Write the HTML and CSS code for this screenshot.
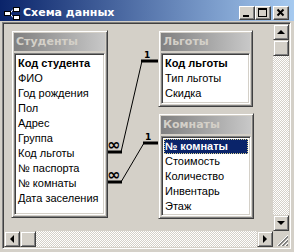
FILE: index.html
```html
<!DOCTYPE html>
<html>
<head>
<meta charset="utf-8">
<link rel="stylesheet" href="styles.css">
</head>
<body>
<div class="win">
  <div class="titlebar">
    <svg class="appicon" width="16" height="14" viewBox="0 0 16 14">
      <path d="M6 7.5 L9 3.5 M6 7.5 L9 11.5" stroke="#fff" stroke-width="1" fill="none"/>
      <rect x="0.5" y="5.5" width="6" height="4" fill="#fff" stroke="#000"/>
      <rect x="9.5" y="1.5" width="6" height="4" fill="#fff" stroke="#000"/>
      <rect x="9.5" y="9.5" width="6" height="4" fill="#fff" stroke="#000"/>
    </svg>
    <span class="title">Схема данных</span>
    <div class="tbtns">
      <span class="tbtn"><svg width="14" height="12" viewBox="0 0 14 12"><rect x="3" y="8" width="6" height="2" fill="#000"/></svg></span>
      <span class="tbtn"><svg width="14" height="12" viewBox="0 0 14 12"><rect x="2.5" y="1.5" width="8" height="8" fill="none" stroke="#000"/><rect x="2" y="1" width="9" height="2" fill="#000"/></svg></span>
      <span class="tbtn close"><svg width="14" height="12" viewBox="0 0 14 12"><path d="M3.5 2.5 L9.5 8.5 M9.5 2.5 L3.5 8.5" stroke="#000" stroke-width="2" fill="none"/></svg></span>
    </div>
  </div>
  <div class="frame">
    <div class="client">
      <div class="canvas">
        <svg class="links" width="269" height="207" viewBox="0 0 269 207">
          <g fill="none" stroke="#000">
            <path d="M117 128 L138 37" stroke-width="1"/>
            <path d="M117 158 L140 119" stroke-width="1"/>
            <path d="M103 128 H118 M137 37 H154 M103 158 H118 M139 119 H154" stroke-width="3"/>
          </g>
          <g class="marks">
            <text x="140" y="34" class="one">1</text>
            <text x="141" y="116" class="one">1</text>
            <text x="103" y="126" class="inf">∞</text>
            <text x="103" y="156" class="inf">∞</text>
          </g>
        </svg>
        <div class="tbl t-stud">
          <div class="thead">Студенты</div>
          <div class="tlist">
            <div class="row key">Код студента</div>
            <div class="row">ФИО</div>
            <div class="row">Год рождения</div>
            <div class="row">Пол</div>
            <div class="row">Адрес</div>
            <div class="row">Группа</div>
            <div class="row">Код льготы</div>
            <div class="row">№ паспорта</div>
            <div class="row">№ комнаты</div>
            <div class="row">Дата заселения</div>
          </div>
        </div>
        <div class="tbl t-lgot">
          <div class="thead">Льготы</div>
          <div class="tlist">
            <div class="row key">Код льготы</div>
            <div class="row">Тип льготы</div>
            <div class="row">Скидка</div>
          </div>
        </div>
        <div class="tbl t-room">
          <div class="thead">Комнаты</div>
          <div class="tlist">
            <div class="row key sel">№ комнаты</div>
            <div class="row">Стоимость</div>
            <div class="row">Количество</div>
            <div class="row">Инвентарь</div>
            <div class="row">Этаж</div>
          </div>
        </div>
      </div>
      <div class="vscroll">
        <div class="sbtn"><span class="arr up"></span></div>
        <div class="sbtn thumb"></div>
        <div class="track"></div>
        <div class="sbtn"><span class="arr down"></span></div>
      </div>
      <div class="hscroll">
        <div class="sbtn"><span class="arr left"></span></div>
        <div class="sbtn thumb"></div>
        <div class="track"></div>
        <div class="sbtn"><span class="arr right"></span></div>
      </div>
      <div class="grip">
        <svg width="16" height="16" viewBox="0 0 16 16">
          <path d="M15 4 L4 15 M15 8 L8 15 M15 12 L12 15" stroke="#fff" stroke-width="1"/>
          <path d="M15 5 L5 15 M15 6 L6 15 M15 9 L9 15 M15 10 L10 15 M15 13 L13 15 M15 14 L14 15" stroke="#808080" stroke-width="1"/>
        </svg>
      </div>
    </div>
  </div>
</div>
</body>
</html>
```

FILE: styles.css
```css
* { box-sizing: border-box; }
html, body { margin: 0; padding: 0; }
body { width: 294px; height: 252px; overflow: hidden; background: #d4d0c8; }

.win {
  width: 294px;
  height: 252px;
  background: #d4d0c8;
  display: flex;
  flex-direction: column;
  font-family: "Liberation Sans", Arial, sans-serif;
}

.titlebar {
  height: 21px;
  padding: 4px 5px 0 4px;
  display: flex;
  align-items: center;
  background: linear-gradient(to right, #0a246a, #a6caf0);
}
.appicon { flex: none; display: block; }
.title {
  margin-left: 3px;
  color: #fff;
  font-family: "DejaVu Sans", sans-serif;
  font-weight: bold;
  font-size: 11px;
  flex: 1;
  white-space: nowrap;
}
.tbtns { display: flex; }
.tbtn {
  width: 16px;
  height: 14px;
  background: #d4d0c8;
  border: 1px solid;
  border-color: #fff #404040 #404040 #fff;
  box-shadow: inset -1px -1px #808080;
  display: block;
}
.tbtn svg { display: block; }
.tbtn.close { margin-left: 2px; }

.frame {
  flex: 1;
  padding: 1px 3px 3px 2px;
  display: flex;
}
.client {
  flex: 1;
  border: 1px solid;
  border-color: #808080 #fff #fff #808080;
  box-shadow: inset 1px 1px #404040, inset -1px -1px #d4d0c8;
  padding: 1px;
  display: grid;
  grid-template-columns: 1fr 16px;
  grid-template-rows: 1fr 16px;
}

.canvas {
  position: relative;
  overflow: hidden;
  background: #d4d0c8;
}
.links { position: absolute; left: 0; top: 0; }
.marks text { font-family: "DejaVu Sans", sans-serif; font-weight: bold; fill: #000; }
.marks .one { font-size: 9px; }
.marks .inf { font-size: 16px; }

.tbl {
  position: absolute;
  background: #d4d0c8;
  border: 1px solid;
  border-color: #d4d0c8 #404040 #404040 #d4d0c8;
  box-shadow: inset 1px 1px #fff, inset -1px -1px #808080;
  padding: 2px;
  display: flex;
  flex-direction: column;
}
.t-stud { left: 7px; top: 6px; width: 97px; height: 188px; }
.t-lgot { left: 154px; top: 6px; width: 95px; height: 77px; }
.t-room { left: 154px; top: 89px; width: 96px; height: 106px; }

.thead {
  height: 18px;
  line-height: 18px;
  padding-left: 2px;
  background: linear-gradient(to right, #808080, #c8c8c8);
  color: #d4d0c8;
  font-family: "DejaVu Sans", sans-serif;
  font-weight: bold;
  font-size: 11px;
  white-space: nowrap;
  overflow: hidden;
}
.tlist {
  flex: 1;
  margin-top: 2px;
  background: #fff;
  border: 1px solid;
  border-color: #808080 #fff #fff #808080;
  box-shadow: inset 1px 1px #404040, inset -1px -1px #d4d0c8;
  padding: 2px 2px 0 2px;
  overflow: hidden;
}
.row {
  height: 15px;
  line-height: 15px;
  font-size: 11px;
  color: #000;
  padding-left: 1px;
  white-space: nowrap;
}
.row.key { font-weight: bold; }
.row.sel {
  background: #0a246a;
  color: #fff;
  outline: 1px dotted #d8d090;
  outline-offset: -1px;
}

.vscroll, .hscroll {
  display: flex;
  background: repeating-conic-gradient(#fff 0 25%, #d4d0c8 0 50%) 0 0 / 2px 2px;
}
.vscroll { flex-direction: column; }
.sbtn {
  flex: none;
  width: 16px;
  height: 16px;
  background: #d4d0c8;
  border: 1px solid;
  border-color: #d4d0c8 #404040 #404040 #d4d0c8;
  box-shadow: inset 1px 1px #fff, inset -1px -1px #808080;
  display: flex;
  align-items: center;
  justify-content: center;
}
.track { flex: 1; }
.arr { width: 0; height: 0; border-style: solid; border-color: transparent; }
.arr.up { border-width: 0 4px 4px 4px; border-bottom-color: #000; }
.arr.down { border-width: 4px 4px 0 4px; border-top-color: #000; }
.arr.left { border-width: 4px 4px 4px 0; border-right-color: #000; }
.arr.right { border-width: 4px 0 4px 4px; border-left-color: #000; }
.grip { background: #d4d0c8; }
.grip svg { display: block; }
```
